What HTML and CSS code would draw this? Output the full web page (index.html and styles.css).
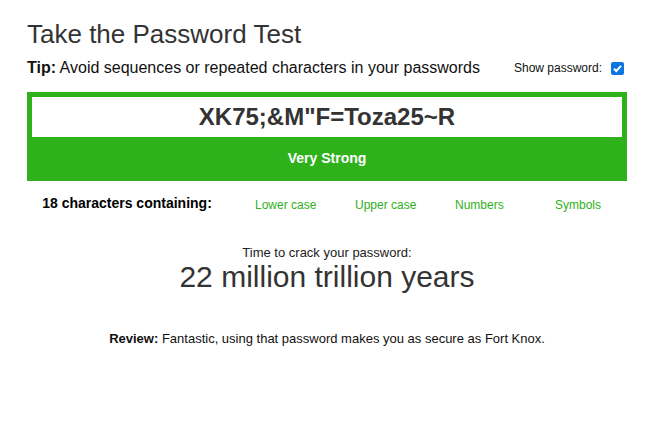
FILE: index.html
```html
<!DOCTYPE html>
<html>
<head>
<meta charset="utf-8">
<link rel="stylesheet" href="styles.css">
</head>
<body>
<div class="wrap">
  <h1 class="title">Take the Password Test</h1>
  <div class="tipline">
    <p class="tip"><b>Tip:</b> Avoid sequences or repeated characters in your passwords</p>
    <label class="show">Show password: <span class="check"><svg width="13" height="13" viewBox="0 0 13 13"><rect x="0" y="0" width="13" height="13" rx="2" fill="#0b75e0"/><path d="M3 6.8 L5.3 9 L10 3.9" fill="none" stroke="#fff" stroke-width="2"/></svg></span></label>
  </div>
  <div class="meter">
    <div class="pw">XK75;&amp;M"F=Toza25~R</div>
    <div class="strength">Very Strong</div>
  </div>
  <div class="chars">
    <div class="count">18 characters containing:</div>
    <div class="type">Lower case</div>
    <div class="type">Upper case</div>
    <div class="type">Numbers</div>
    <div class="type last">Symbols</div>
  </div>
  <div class="crack">
    <div class="crack-label">Time to crack your password:</div>
    <div class="crack-time">22 million trillion years</div>
  </div>
  <p class="review"><b>Review:</b> Fantastic, using that password makes you as secure as Fort Knox.</p>
</div>
</body>
</html>
```
FILE: styles.css
```css
html, body { margin: 0; padding: 0; background: #fff; }
body { font-family: "Liberation Sans", Arial, sans-serif; color: #000; }
.wrap { width: 600px; margin-left: 27px; padding-top: 19px; }
.title { margin: 0; font-size: 26px; font-weight: normal; color: #333; line-height: 30px; }
.tipline { display: flex; align-items: center; justify-content: space-between; margin-top: 10px; height: 18px; }
.tip { margin: 0; font-size: 16px; line-height: 18px; color: #111; }
.show { font-size: 12px; display: flex; align-items: center; gap: 9px; margin-right: 3px; color: #111; }
.check { display: block; width: 13px; height: 13px; }
.check svg { display: block; }
.meter { margin-top: 15px; background: #2eb11b; padding: 5px 5px 0; }
.pw { background: #fff; height: 40px; line-height: 40px; text-align: center; font-size: 24px; font-weight: bold; color: #333; }
.strength { height: 44px; line-height: 43px; text-align: center; color: #fff; font-weight: bold; font-size: 14px; }
.chars { display: flex; margin-top: 14px; font-size: 12px; line-height: 16px; }
.count { flex: 0 0 200px; text-align: center; font-weight: bold; font-size: 14px; margin-right: 28px; }
.type { flex: 0 0 100px; color: #2eb11b; padding-top: 2px; }
.type.last { flex: 0 0 auto; }
.crack { text-align: center; margin-top: 32px; color: #222; }
.crack-label { font-size: 13px; line-height: 15px; }
.crack-time { font-size: 30px; line-height: 34px; color: #333; }
.review { text-align: center; font-size: 13px; line-height: 15px; margin: 37px 0 0; color: #111; }
```
